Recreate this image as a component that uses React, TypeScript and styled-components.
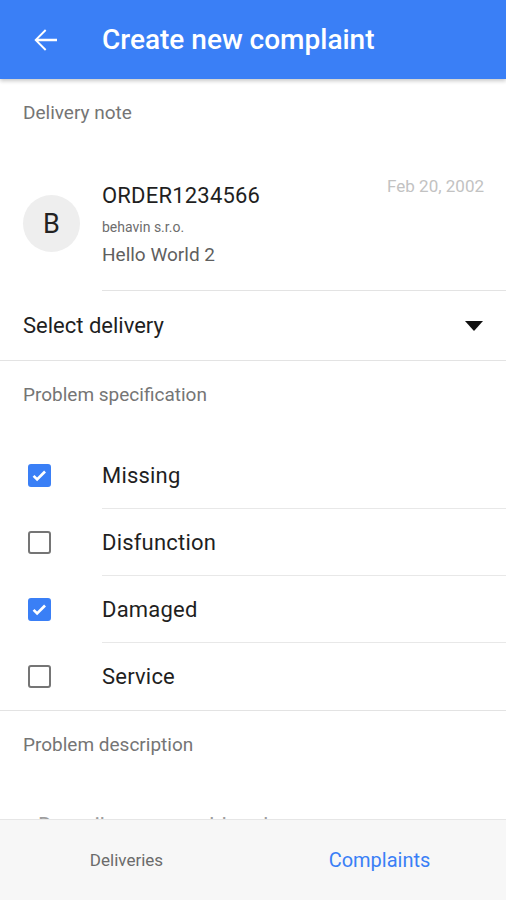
import React, { useState } from "react"
import styled, { createGlobalStyle } from "styled-components"

const GlobalStyle = createGlobalStyle`
  html, body {
    margin: 0;
    padding: 0;
    background: #ffffff;
    font-family: Roboto, "Liberation Sans", sans-serif;
  }
`

const Screen = styled.div`
  width: 506px;
  height: 900px;
  display: flex;
  flex-direction: column;
  overflow: hidden;
  background: #fff;
`

const AppBar = styled.header`
  height: 79px;
  flex-shrink: 0;
  background: #3a7ff6;
  display: flex;
  align-items: center;
  box-shadow: 0 2px 4px rgba(0, 0, 0, 0.22);
  position: relative;
  z-index: 2;
`

const BackButton = styled.button`
  width: 102px;
  height: 79px;
  padding: 0 0 0 27px;
  border: none;
  background: none;
  display: flex;
  align-items: center;
  cursor: pointer;
`

const Title = styled.h1`
  margin: 0;
  color: #fff;
  font-size: 28px;
  font-weight: 500;
`

const Content = styled.main`
  flex: 1;
  overflow: hidden;
`

const SectionLabel = styled.div`
  padding: 0 23px;
  height: 66px;
  display: flex;
  align-items: center;
  color: #757575;
  font-size: 19px;
`

const OrderItem = styled.div`
  display: flex;
  align-items: flex-start;
`

const Avatar = styled.div`
  width: 57px;
  height: 57px;
  border-radius: 50%;
  background: #eeeeee;
  color: #222;
  font-size: 27px;
  display: flex;
  align-items: center;
  justify-content: center;
  margin: 50px 22px 0 23px;
  flex-shrink: 0;
`

const OrderBody = styled.div`
  flex: 1;
  border-bottom: 1px solid #e3e3e3;
  padding-bottom: 24px;
  display: flex;
  justify-content: space-between;
`

const OrderText = styled.div`
  display: flex;
  flex-direction: column;
`

const OrderTitle = styled.div`
  font-size: 22px;
  color: #1f1f1f;
  line-height: 26px;
  margin-top: 38px;
  letter-spacing: 0.2px;
`

const Company = styled.div`
  font-size: 14px;
  color: #6d6d6d;
  margin-top: 10px;
  line-height: 16px;
`

const Subtitle = styled.div`
  font-size: 19px;
  color: #5f5f5f;
  margin-top: 9px;
  line-height: 22px;
`

const DateText = styled.div`
  font-size: 17px;
  line-height: 20px;
  color: #c2c2c2;
  margin: 31px 22px 0 0;
`

const SelectRow = styled.div`
  height: 69px;
  display: flex;
  align-items: center;
  justify-content: space-between;
  padding: 0 22px 0 23px;
  border-bottom: 1px solid #e3e3e3;
  font-size: 22px;
  color: #1f1f1f;
`

const CheckList = styled.div`
  padding-top: 15px;
  border-bottom: 1px solid #e3e3e3;
`

const CheckRow = styled.label`
  display: flex;
  align-items: center;
  height: 67px;
  cursor: pointer;
`

const BoxCell = styled.div`
  width: 102px;
  padding-left: 28px;
  box-sizing: border-box;
  display: flex;
  align-items: center;
`

const Box = styled.span<{ $checked: boolean }>`
  width: 23px;
  height: 23px;
  box-sizing: border-box;
  border-radius: 3px;
  border: 2px solid ${(p) => (p.$checked ? "#3a7ff6" : "#757575")};
  background: ${(p) => (p.$checked ? "#3a7ff6" : "transparent")};
  display: flex;
  align-items: center;
  justify-content: center;
`

const CheckLabel = styled.div<{ $last: boolean }>`
  flex: 1;
  height: 100%;
  display: flex;
  align-items: center;
  font-size: 22px;
  color: #1f1f1f;
  letter-spacing: 0.2px;
  box-sizing: border-box;
  border-bottom: ${(p) => (p.$last ? "none" : "1px solid #e8e8e8")};
`

const Description = styled.textarea`
  display: block;
  width: 100%;
  box-sizing: border-box;
  border: none;
  resize: none;
  outline: none;
  padding: 36px 23px 0 38px;
  height: 120px;
  font-family: inherit;
  font-size: 22px;
  color: #1f1f1f;
  &::placeholder {
    color: #9e9e9e;
  }
`

const TabBar = styled.nav`
  height: 80px;
  flex-shrink: 0;
  background: #f7f7f7;
  border-top: 1px solid #e6e6e6;
  display: flex;
  position: relative;
  z-index: 2;
`

const Tab = styled.button<{ $active: boolean }>`
  flex: 1;
  border: none;
  background: none;
  font-family: inherit;
  font-size: ${(p) => (p.$active ? "20px" : "17px")};
  color: ${(p) => (p.$active ? "#3a7ff6" : "#6b6b6b")};
  cursor: pointer;
  padding: 0;
`

const problems = [
  { id: "missing", label: "Missing", checked: true },
  { id: "disfunction", label: "Disfunction", checked: false },
  { id: "damaged", label: "Damaged", checked: true },
  { id: "service", label: "Service", checked: false },
]

export default function App() {
  const [checked, setChecked] = useState<Record<string, boolean>>(
    Object.fromEntries(problems.map((p) => [p.id, p.checked]))
  )
  const [tab, setTab] = useState("complaints")

  return (
    <Screen>
      <GlobalStyle />
      <AppBar>
        <BackButton aria-label="Back">
          <svg width="36" height="36" viewBox="0 0 24 24">
            <path d="M20 11.2H7.5l5.4-5.4L12 4.9 4.9 12l7.1 7.1.9-.9-5.4-5.4H20z" fill="#fff" />
          </svg>
        </BackButton>
        <Title>Create new complaint</Title>
      </AppBar>

      <Content>
        <SectionLabel>Delivery note</SectionLabel>
        <OrderItem>
          <Avatar>B</Avatar>
          <OrderBody>
            <OrderText>
              <OrderTitle>ORDER1234566</OrderTitle>
              <Company>behavin s.r.o.</Company>
              <Subtitle>Hello World 2</Subtitle>
            </OrderText>
            <DateText>Feb 20, 2002</DateText>
          </OrderBody>
        </OrderItem>

        <SelectRow>
          <span>Select delivery</span>
          <svg width="20" height="10" viewBox="0 0 20 10">
            <path d="M1 0h18L10 10z" fill="#111" />
          </svg>
        </SelectRow>

        <SectionLabel>Problem specification</SectionLabel>
        <CheckList>
          {problems.map((p, i) => (
            <CheckRow key={p.id} onClick={() => setChecked({ ...checked, [p.id]: !checked[p.id] })}>
              <BoxCell>
                <Box $checked={checked[p.id]}>
                  {checked[p.id] && (
                    <svg width="19" height="19" viewBox="0 0 24 24">
                      <path d="M4.5 12.5l4.5 4.5 10-10" stroke="#fff" strokeWidth="3.4" fill="none" />
                    </svg>
                  )}
                </Box>
              </BoxCell>
              <CheckLabel $last={i === problems.length - 1}>{p.label}</CheckLabel>
            </CheckRow>
          ))}
        </CheckList>

        <SectionLabel>Problem description</SectionLabel>
        <Description placeholder="Describe your problem here" />
      </Content>

      <TabBar>
        <Tab $active={tab === "deliveries"} onClick={() => setTab("deliveries")}>
          Deliveries
        </Tab>
        <Tab $active={tab === "complaints"} onClick={() => setTab("complaints")}>
          Complaints
        </Tab>
      </TabBar>
    </Screen>
  )
}
